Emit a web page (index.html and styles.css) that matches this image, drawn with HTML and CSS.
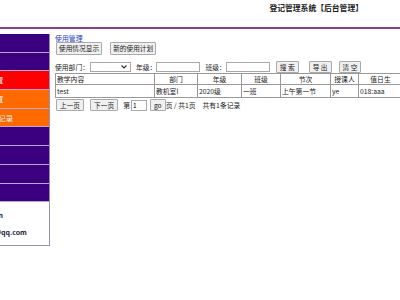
FILE: index.html
```html
<!DOCTYPE html>
<html>
<head>
<meta charset="utf-8">
<link rel="stylesheet" href="styles.css">
</head>
<body>
<div class="page">
  <div class="header"><span class="title">登记管理系统【后台管理】</span></div>
  <div class="body">
    <div class="sidebar">
      <div class="item purple">系统首页</div>
      <div class="item purple">用户管理</div>
      <div class="item red">教室使用设置</div>
      <div class="item orange">使用计划处置</div>
      <div class="item orange long">教室使用情况纪录</div>
      <div class="item purple">部门管理</div>
      <div class="item purple">年级管理</div>
      <div class="item purple">班级管理</div>
      <div class="item purple">退出系统</div>
      <div class="info">
        <div class="line">admin</div>
        <div class="line mail">admin@qq.com</div>
      </div>
    </div>
    <div class="main">
      <a class="crumb">使用管理</a>
      <div class="tabs">
        <button class="btn">使用情况显示</button>
        <button class="btn">新的使用计划</button>
      </div>
      <div class="filter">
        <span>使用部门：</span>
        <div class="sel"><svg width="6" height="4" viewBox="0 0 6 4"><path d="M0.5 0.5 L3 3 L5.5 0.5" fill="none" stroke="#333" stroke-width="1.2"/></svg></div>
        <span class="lbl">年级：</span><input class="inp">
        <span class="lbl">班级：</span><input class="inp">
        <button class="btn b2 s1">搜 索</button>
        <button class="btn b2 s2">导 出</button>
        <button class="btn b2 s3">清 空</button>
      </div>
      <table class="grid">
        <tr class="head">
          <th class="c1 left">教学内容</th><th class="c2">部门</th><th class="c3">年级</th><th class="c4">班级</th><th class="c5">节次</th><th class="c6">授课人</th><th class="c7">值日生</th><th class="c8"></th>
        </tr>
        <tr class="data">
          <td>test</td><td>教机室l</td><td>2020级</td><td>一班</td><td>上午第一节</td><td>ye</td><td>018:aaa</td><td><button class="btn op">修改</button></td>
        </tr>
      </table>
      <div class="pager">
        <button class="btn">上一页</button>
        <button class="btn nx">下一页</button>
        <span class="di">第</span><input class="pg" value="1"><button class="btn go">go</button>
        <span>页 / 共1页</span>
        <span class="total">共有1条记录</span>
      </div>
    </div>
  </div>
</div>
</body>
</html>
```
FILE: styles.css
```css
html, body {
  margin: 0;
  padding: 0;
  background: #fff;
  overflow: hidden;
}
body {
  font-family: "Noto Sans CJK SC", "DejaVu Sans", sans-serif;
  font-size: 6.8px;
  color: #222;
}
.page {
  width: 400px;
  height: 300px;
  overflow: hidden;
}
.header {
  border-bottom: 2px solid #8b3d8f;
  display: flex;
  justify-content: flex-end;
  padding-right: 37px;
  box-sizing: border-box;
  height: 29px;
  padding-top: 3px;
}
.title {
  font-weight: bold;
  font-size: 7.8px;
  color: #222;
  line-height: 10px;
}
.body {
  display: flex;
  margin-top: 5px;
}
.sidebar {
  width: 110px;
  margin-left: -60px;
  flex: none;
  border-right: 1px solid #9a8fb0;
  box-sizing: border-box;
  display: flex;
  flex-direction: column;
  align-self: flex-start;
  font-size: 7.4px;
}
.item {
  height: 18.7px;
  line-height: 18px;
  color: #f4f0f8;
  border-bottom: 1px solid #b9a6d6;
  box-sizing: border-box;
  padding-left: 19px;
  white-space: nowrap;
  overflow: hidden;
}
.purple { background: #3a0080; }
.red { background: #ff0000; }
.orange { background: #ff6a00; }
.long { padding-left: 14px; }
.info {
  height: 44px;
  border-bottom: 1px solid #9a8fb0;
  box-sizing: border-box;
  font-weight: bold;
  color: #1e1b3a;
  background: #fff;
  display: flex;
  flex-direction: column;
  justify-content: space-around;
  padding-top: 4px;
  padding-bottom: 4px;
  white-space: nowrap;
  overflow: hidden;
  font-size: 7px;
}
.line { padding-left: 41px; }
.line.mail { padding-left: 32px; }
.main {
  margin-left: 5px;
  flex: none;
  width: 360px;
}
.crumb {
  display: block;
  color: #2a3fbf;
  line-height: 8px;
  height: 8px;
  font-size: 6.9px;
}
.tabs {
  display: flex;
  gap: 8px;
  padding-left: 1px;
}
.btn {
  font-family: inherit;
  font-size: 6.7px;
  height: 13px;
  padding: 0 2px;
  margin: 0;
  line-height: 11px;
  background: #f0f0f0;
  border: 1px solid #aaa;
  border-radius: 1px;
  color: #222;
  white-space: nowrap;
}
.filter {
  display: flex;
  align-items: center;
  margin-top: 6px;
  height: 12px;
  white-space: nowrap;
}
.sel {
  width: 41px;
  height: 10px;
  box-sizing: border-box;
  border: 1px solid #aaa;
  background: #fff;
  display: flex;
  align-items: center;
  justify-content: flex-end;
  padding-right: 3px;
  margin-left: 1px;
}
.lbl { margin-left: 5px; }
.inp {
  width: 44px;
  height: 10px;
  box-sizing: border-box;
  padding: 0;
  margin: 0;
  border: 1px solid #aaa;
}
.b2 { height: 12px; padding: 0 3px; }
.s1 { margin-left: 6px; }
.s2 { margin-left: 10px; }
.s3 { margin-left: 7px; }
.grid {
  border-collapse: collapse;
  table-layout: fixed;
  width: 360px;
}
.grid th, .grid td {
  border: 1px solid #999;
  padding: 0 1px;
  white-space: nowrap;
  overflow: hidden;
  font-weight: normal;
  text-align: left;
}
.grid th { text-align: center; height: 10px; line-height: 10px; }
.grid th.left { text-align: left; }
.grid td { height: 12px; line-height: 12px; }
.c1 { width: 96px; }
.c2 { width: 40px; }
.c3 { width: 41px; }
.c4 { width: 36px; }
.c5 { width: 47px; }
.c6 { width: 25px; }
.c7 { width: 41px; }
.c8 { width: 20px; }
.op { height: 11px; line-height: 9px; }
.pager {
  display: flex;
  align-items: center;
  margin-top: 1px;
  padding-left: 1px;
  white-space: nowrap;
}
.pager .btn { height: 12px; padding: 0 3px; }
.pager .nx { margin-left: 6px; }
.di { margin-left: 5px; }
.pg {
  width: 16px;
  height: 11px;
  box-sizing: border-box;
  padding: 0 0 0 1px;
  margin: 0 3px 0 1px;
  border: 1px solid #aaa;
  font-size: 6.5px;
  font-family: inherit;
}
.pager .go { padding: 0 3px; }
.total { margin-left: 7px; }
```
